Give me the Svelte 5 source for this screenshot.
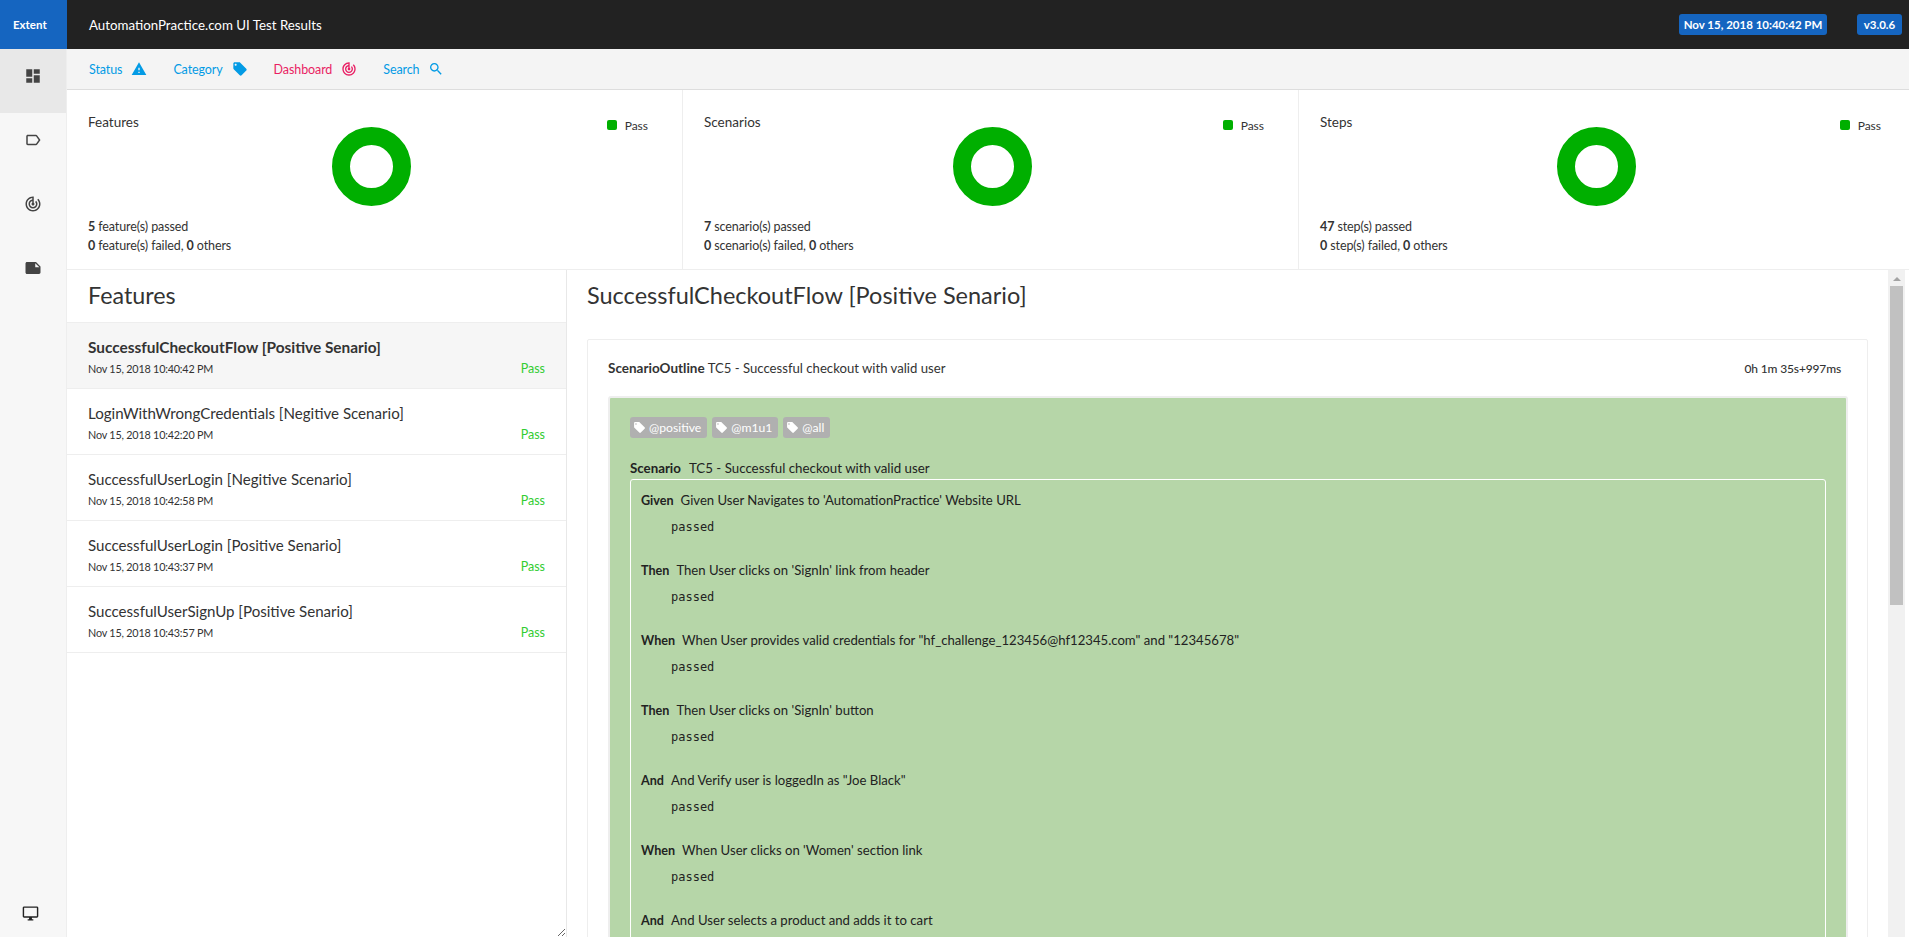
<script>
	const icons = {
		dashboard: 'M3 13h8V3H3v10zm0 8h8v-6H3v6zm10 0h8V11h-8v10zm0-18v6h8V3h-8z',
		label: 'M17.63 5.84C17.27 5.33 16.67 5 16 5L5 5.01C3.9 5.01 3 5.9 3 7v10c0 1.1.9 1.99 2 1.99L16 19c.67 0 1.27-.33 1.63-.84L22 12l-4.37-6.16zM16 17H5V7h11l3.55 5L16 17z',
		track: 'M19.07 4.93l-1.41 1.41C19.1 7.79 20 9.79 20 12c0 4.42-3.58 8-8 8s-8-3.58-8-8c0-4.08 3.05-7.44 7-7.93v2.02C8.16 6.57 6 9.03 6 12c0 3.31 2.69 6 6 6s6-2.69 6-6c0-1.66-.67-3.16-1.76-4.24l-1.41 1.41C15.55 9.9 16 10.9 16 12c0 2.21-1.79 4-4 4s-4-1.79-4-4c0-1.86 1.28-3.41 3-3.86v2.14c-.6.35-1 .98-1 1.72 0 1.1.9 2 2 2s2-.9 2-2c0-.74-.4-1.38-1-1.72V2h-1C6.48 2 2 6.48 2 12s4.48 10 10 10 10-4.48 10-10c0-2.76-1.12-5.26-2.93-7.07z',
		note: 'M22 10l-6-6H4c-1.1 0-2 .9-2 2v12.01c0 1.1.9 1.99 2 1.99l16-.01c1.1 0 2-.89 2-1.99v-8zm-7-4.5l5.5 5.5H15V5.5z',
		desktop: 'M21 2H3c-1.1 0-2 .9-2 2v12c0 1.1.9 2 2 2h7v2H8v2h8v-2h-2v-2h7c1.1 0 2-.9 2-2V4c0-1.1-.9-2-2-2zm0 14H3V4h18v12z',
		warning: 'M1 21h22L12 2 1 21zm12-3h-2v-2h2v2zm0-4h-2v-4h2v4z',
		offer: 'M21.41 11.58l-9-9C12.05 2.22 11.55 2 11 2H4c-1.1 0-2 .9-2 2v7c0 .55.22 1.05.59 1.42l9 9c.36.36.86.58 1.41.58.55 0 1.05-.22 1.41-.59l7-7c.37-.36.59-.86.59-1.41 0-.55-.23-1.06-.59-1.42zM5.5 7C4.67 7 4 6.33 4 5.5S4.67 4 5.5 4 7 4.67 7 5.5 6.33 7 5.5 7z',
		search: 'M15.5 14h-.79l-.28-.27C15.41 12.59 16 11.11 16 9.5 16 5.91 13.09 3 9.5 3S3 5.91 3 9.5 5.91 16 9.5 16c1.61 0 3.09-.59 4.23-1.57l.27.28v.79l5 4.99L20.49 19l-4.99-5zm-6 0C7.01 14 5 11.99 5 9.5S7.01 5 9.5 5 14 7.01 14 9.5 11.99 14 9.5 14z'
	};

	const navLinks = [
		{ label: 'Status', icon: 'warning' },
		{ label: 'Category', icon: 'offer' },
		{ label: 'Dashboard', icon: 'track', pink: true },
		{ label: 'Search', icon: 'search' }
	];

	const stats = [
		{ title: 'Features', left: 265, passed: '5', noun: 'feature(s)' },
		{ title: 'Scenarios', left: 270, passed: '7', noun: 'scenario(s)' },
		{ title: 'Steps', left: 258, passed: '47', noun: 'step(s)' }
	];

	const features = [
		{ name: 'SuccessfulCheckoutFlow [Positive Senario]', time: 'Nov 15, 2018 10:40:42 PM', active: true },
		{ name: 'LoginWithWrongCredentials [Negitive Scenario]', time: 'Nov 15, 2018 10:42:20 PM' },
		{ name: 'SuccessfulUserLogin [Negitive Scenario]', time: 'Nov 15, 2018 10:42:58 PM' },
		{ name: 'SuccessfulUserLogin [Positive Senario]', time: 'Nov 15, 2018 10:43:37 PM' },
		{ name: 'SuccessfulUserSignUp [Positive Senario]', time: 'Nov 15, 2018 10:43:57 PM' }
	];

	const steps = [
		['Given', "Given User Navigates to 'AutomationPractice' Website URL", true],
		['Then', "Then User clicks on 'SignIn' link from header", true],
		['When', 'When User provides valid credentials for "hf_challenge_123456@hf12345.com" and "12345678"', true],
		['Then', "Then User clicks on 'SignIn' button", true],
		['And', 'And Verify user is loggedIn as "Joe Black"', true],
		['When', "When User clicks on 'Women' section link", true],
		['And', 'And User selects a product and adds it to cart', false]
	];
</script>

{#snippet icon(name, size)}
	<svg class="icon" width={size} height={size} viewBox="0 0 24 24" fill="currentColor"><path d={icons[name]} /></svg>
{/snippet}

<div class="page">
	<header class="topbar">
		<div class="logo">Extent</div>
		<div class="report-name">AutomationPractice.com UI Test Results</div>
		<span class="badge date">Nov 15, 2018 10:40:42 PM</span>
		<span class="badge version">v3.0.6</span>
	</header>

	<div class="body">
		<aside class="sidebar">
			<div class="side-item active">{@render icon('dashboard', 18)}</div>
			<div class="side-item">{@render icon('label', 18)}</div>
			<div class="side-item">{@render icon('track', 18)}</div>
			<div class="side-item">{@render icon('note', 18)}</div>
			<div class="side-bottom">{@render icon('desktop', 17)}</div>
		</aside>

		<main class="main">
			<nav class="subnav">
				{#each navLinks as link}
					<span class="nav-link" class:pink={link.pink}>
						{link.label}
						{@render icon(link.icon, 16)}
					</span>
				{/each}
			</nav>

			<section class="stats">
				{#each stats as s}
					<div class="stat">
						<div class="stat-grid" style="grid-template-columns: {s.left - 21}px 79px 1fr">
							<div class="stat-title">{s.title}</div>
							<svg class="donut" width="79" height="79" viewBox="0 0 79 79">
								<circle cx="39.5" cy="39.5" r="30.5" fill="none" stroke="#00af00" stroke-width="18" />
							</svg>
							<div class="legend"><i></i>Pass</div>
						</div>
						<div class="stat-line"><b>{s.passed}</b> {s.noun} passed</div>
						<div class="stat-line"><b>0</b> {s.noun} failed, <b>0</b> others</div>
					</div>
				{/each}
			</section>

			<section class="split">
				<div class="list-panel">
					<h3 class="list-title">Features</h3>
					{#each features as f}
						<div class="feature" class:current={f.active}>
							<div class="feature-name">{f.name}</div>
							<div class="feature-foot">
								<span class="feature-time">{f.time}</span>
								<span class="feature-status">Pass</span>
							</div>
						</div>
					{/each}
				</div>

				<div class="detail">
					<div class="detail-inner">
						<h2 class="detail-title">SuccessfulCheckoutFlow [Positive Senario]</h2>
						<div class="card">
							<div class="card-head">
								<span><b>ScenarioOutline</b> TC5 - Successful checkout with valid user</span>
								<span class="duration">0h 1m 35s+997ms</span>
							</div>
							<div class="scenario">
								<div class="tags">
									{#each ['@positive', '@m1u1', '@all'] as tag}
										<span class="tag">{@render icon('offer', 13)}{tag}</span>
									{/each}
								</div>
								<div class="scenario-name"><b>Scenario</b>TC5 - Successful checkout with valid user</div>
								<div class="steps">
									{#each steps as [kw, text, done]}
										<div class="step">
											<div class="step-name"><b>{kw}</b>{text}</div>
											{#if done}
												<div class="step-status">passed</div>
											{/if}
										</div>
									{/each}
								</div>
							</div>
						</div>
					</div>
					<div class="scrollbar">
						<div class="arrow"></div>
						<div class="thumb"></div>
					</div>
				</div>
			</section>
		</main>
	</div>
</div>

<style>
	:global(body) {
		margin: 0;
		background: #fff;
		overflow: hidden;
	}

	.page {
		height: 937px;
		display: flex;
		flex-direction: column;
		overflow: hidden;
		font-family: Lato, 'Noto Sans', sans-serif;
		font-size: 13px;
		color: #333;
	}

	.icon {
		display: block;
		flex: none;
	}

	.topbar {
		height: 49px;
		flex: none;
		display: flex;
		align-items: center;
		background: #222;
		color: #fff;
	}

	.logo {
		width: 67px;
		height: 100%;
		box-sizing: border-box;
		padding-left: 13px;
		display: flex;
		align-items: center;
		background: #1565c0;
		font-size: 11.5px;
		font-weight: 700;
	}

	.report-name {
		margin-left: 22px;
		margin-right: auto;
		font-size: 13.3px;
	}

	.badge {
		height: 21px;
		display: flex;
		align-items: center;
		justify-content: center;
		background: #1565c0;
		border-radius: 3px;
		font-size: 11.5px;
		font-weight: 700;
		white-space: nowrap;
	}

	.date {
		width: 148px;
	}

	.version {
		width: 45px;
		margin-left: 30px;
		margin-right: 7px;
	}

	.body {
		flex: 1;
		display: flex;
		min-height: 0;
	}

	.sidebar {
		width: 67px;
		flex: none;
		display: flex;
		flex-direction: column;
		background: #f7f7f7;
		border-right: 1px solid #eee;
		box-sizing: border-box;
		color: #444;
	}

	.side-item {
		height: 64px;
		box-sizing: border-box;
		padding-top: 18px;
		display: flex;
		justify-content: center;
	}

	.side-item.active {
		background: #e8e8e8;
	}

	.side-bottom {
		margin-top: auto;
		padding: 0 6px 15px 0;
		display: flex;
		justify-content: center;
		color: #222;
	}

	.main {
		flex: 1;
		min-width: 0;
		display: flex;
		flex-direction: column;
		overflow: hidden;
	}

	.subnav {
		height: 41px;
		flex: none;
		box-sizing: border-box;
		display: flex;
		align-items: center;
		gap: 26px;
		padding-left: 22px;
		background: #f4f4f4;
		border-bottom: 1px solid #ddd;
	}

	.nav-link {
		display: flex;
		align-items: center;
		gap: 9px;
		color: #039be5;
		font-size: 12.5px;
		letter-spacing: -0.1px;
	}

	.nav-link.pink {
		color: #e91e63;
	}

	.stats {
		height: 180px;
		flex: none;
		box-sizing: border-box;
		display: flex;
		border-bottom: 1px solid #eee;
	}

	.stat {
		width: 616px;
		flex: none;
		box-sizing: border-box;
		padding: 22px 0 0 21px;
		border-right: 1px solid #eee;
	}

	.stat:last-child {
		border-right: 0;
	}

	.stat-grid {
		display: grid;
		margin-bottom: 11px;
	}

	.stat-title {
		font-size: 13.5px;
		line-height: 20px;
	}

	.donut {
		display: block;
		margin-top: 15px;
	}

	.legend {
		justify-self: end;
		display: flex;
		align-items: center;
		height: 20px;
		margin-top: 3px;
		margin-right: 34px;
		font-size: 12px;
	}

	.legend i {
		width: 10px;
		height: 10px;
		border-radius: 2px;
		background: #00af00;
		margin-right: 8px;
	}

	.stat-line {
		line-height: 19px;
		font-size: 12.5px;
		letter-spacing: -0.1px;
	}

	.stat-line b {
		font-weight: 700;
	}

	.split {
		flex: 1;
		min-height: 0;
		display: flex;
	}

	.list-panel {
		width: 500px;
		flex: none;
		box-sizing: border-box;
		border-right: 1px solid #e8e8e8;
		resize: vertical;
		overflow: hidden;
	}

	.list-title {
		margin: 0;
		height: 53px;
		box-sizing: border-box;
		padding-left: 21px;
		border-bottom: 1px solid #eee;
		font-size: 23.3px;
		font-weight: 400;
		line-height: 51px;
	}

	.feature {
		height: 66px;
		box-sizing: border-box;
		padding: 14px 21px 0;
		border-bottom: 1px solid #eee;
	}

	.feature.current {
		background: #f6f6f6;
	}

	.feature-name {
		font-size: 15.1px;
		line-height: 20px;
	}

	.feature.current .feature-name {
		font-size: 15.4px;
		font-weight: 700;
	}

	.feature-foot {
		display: flex;
		justify-content: space-between;
		margin-top: 3px;
		line-height: 18px;
	}

	.feature-time {
		font-size: 10.8px;
		letter-spacing: -0.2px;
	}

	.feature-status {
		font-size: 12.5px;
		color: #32cd32;
	}

	.detail {
		flex: 1;
		min-width: 0;
		display: flex;
		padding-right: 4px;
	}

	.detail-inner {
		flex: 1;
		min-width: 0;
		padding: 0 20px;
		overflow: hidden;
	}

	.detail-title {
		margin: 0;
		height: 69px;
		font-size: 23.5px;
		font-weight: 400;
		line-height: 51px;
	}

	.card {
		border: 1px solid #eee;
		padding: 0 19px 20px 20px;
		border-radius: 2px;
	}

	.card-head {
		height: 56px;
		display: flex;
		justify-content: space-between;
		align-items: center;
		font-size: 13.15px;
		padding-right: 7px;
	}

	.card-head b {
		font-size: 13.5px;
	}

	.duration {
		font-size: 12px;
		letter-spacing: -0.15px;
		font-weight: 500;
	}

	.scenario {
		border: 2px solid #eee;
		border-radius: 3px;
		background: #b6d6a8;
		padding: 19px 20px 20px;
		color: #222;
	}

	.tags {
		display: flex;
		gap: 5px;
	}

	.tag {
		display: flex;
		align-items: center;
		gap: 3px;
		height: 21px;
		padding: 0 6px 0 3px;
		border-radius: 3px;
		background: #b0b0b0;
		color: #fff;
		font-size: 12.2px;
	}

	.scenario-name {
		margin-top: 20px;
		line-height: 20px;
		font-size: 13.3px;
		height: 21px;
	}

	.scenario-name b {
		margin-right: 8px;
	}

	.steps {
		border: 1px solid #fff;
		border-radius: 3px;
		padding: 10px 10px 0;
	}

	.step {
		height: 70px;
		font-size: 13.15px;
	}

	.step-name {
		line-height: 20px;
	}

	.step-name b {
		font-size: 12.6px;
		margin-right: 7px;
	}

	.step-status {
		margin: 6px 0 0 30px;
		font-family: 'DejaVu Sans Mono', monospace;
		font-size: 12px;
		line-height: 20px;
	}

	.scrollbar {
		width: 17px;
		flex: none;
		background: #f1f1f1;
		display: flex;
		flex-direction: column;
		align-items: center;
	}

	.arrow {
		margin: 7px 0 5px;
		border-left: 4px solid transparent;
		border-right: 4px solid transparent;
		border-bottom: 4px solid #a3a3a3;
	}

	.thumb {
		width: 13px;
		height: 319px;
		background: #c1c1c1;
	}
</style>
